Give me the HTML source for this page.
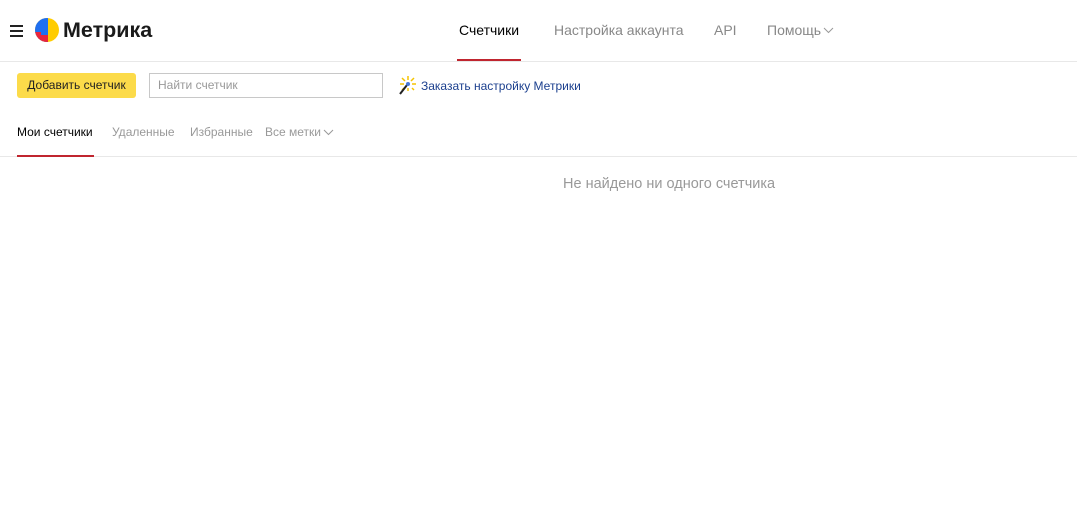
<!DOCTYPE html>
<html><head><meta charset="utf-8"><style>
*{margin:0;padding:0;box-sizing:border-box}
body{width:1077px;height:520px;background:#fff;font-family:"Liberation Sans",Arial,sans-serif;position:relative;overflow:hidden;color:#000}
.a{position:absolute;white-space:nowrap}
</style></head><body>
<div class="a" style="left:10px;top:25px;width:13px;height:2px;background:#222"></div>
<div class="a" style="left:10px;top:30px;width:13px;height:2px;background:#222"></div>
<div class="a" style="left:10px;top:35px;width:13px;height:2px;background:#222"></div>
<svg class="a" style="left:35px;top:18px" width="24" height="24" viewBox="0 0 24 24">
<defs><clipPath id="c"><circle cx="12" cy="12" r="12"/></clipPath></defs>
<g clip-path="url(#c)"><rect width="24" height="24" fill="#ffcc00"/><rect width="13" height="24" fill="#1f6ff0"/><rect x="0" y="14" width="6" height="10" fill="#e9253c"/><rect x="6" y="17" width="7" height="7" fill="#e9253c"/></g></svg>
<div class="a" style="left:63px;top:18px;font-size:21.5px;font-weight:bold;color:#1a1a1a">Метрика</div>
<div class="a" style="left:459px;top:22px;font-size:14px;color:#000">Счетчики</div>
<div class="a" style="left:457px;top:59px;width:64px;height:2px;background:#c0252f"></div>
<div class="a" style="left:554px;top:22px;font-size:14px;color:#888">Настройка аккаунта</div>
<div class="a" style="left:714px;top:22px;font-size:14px;color:#888">API</div>
<div class="a" style="left:767px;top:22px;font-size:14px;color:#888">Помощь</div>
<svg class="a" style="left:823px;top:26px" width="11" height="8"><path d="M1 2l4.5 4.5L10 2" stroke="#999" fill="none"/></svg>
<div class="a" style="left:0;top:61px;width:1077px;height:1px;background:#e8e8e8"></div>
<div class="a" style="left:17px;top:73px;width:119px;height:25px;background:#fcdb4a;border-radius:3px;font-size:12px;line-height:25px;text-align:center;color:#222">Добавить счетчик</div>
<div class="a" style="left:149px;top:73px;width:234px;height:25px;border:1px solid #c8c8c8;font-size:12px;line-height:23px;padding-left:8px;color:#999">Найти счетчик</div>
<svg class="a" style="left:397px;top:75px" width="22" height="22" viewBox="0 0 22 22"><g stroke="#f5c400" stroke-width="1.5"><path d="M11 1v4M11 13v3M3 9h4M15 9h4M5 3l3 3M17 3l-3 3M5 15l2-2M17 15l-2-2"/></g><path d="M10 10L3 19" stroke="#222" stroke-width="2"/><circle cx="11" cy="9" r="2" fill="#4a7ad8"/></svg>
<div class="a" style="left:421px;top:79px;font-size:12px;color:#1b3f8e">Заказать настройку Метрики</div>
<div class="a" style="left:17px;top:125px;font-size:12px;color:#000">Мои счетчики</div>
<div class="a" style="left:112px;top:125px;font-size:12px;color:#999">Удаленные</div>
<div class="a" style="left:190px;top:125px;font-size:12px;color:#999">Избранные</div>
<div class="a" style="left:265px;top:125px;font-size:12px;color:#999">Все метки</div>
<svg class="a" style="left:323px;top:128px" width="11" height="8"><path d="M1 2l4.5 4.5L10 2" stroke="#999" fill="none"/></svg>
<div class="a" style="left:0;top:156px;width:1077px;height:1px;background:#e8e8e8"></div>
<div class="a" style="left:17px;top:155px;width:77px;height:2px;background:#c0252f"></div>
<div class="a" style="left:563px;top:176px;font-size:14.5px;color:#999">Не найдено ни одного счетчика</div>
</body></html>
